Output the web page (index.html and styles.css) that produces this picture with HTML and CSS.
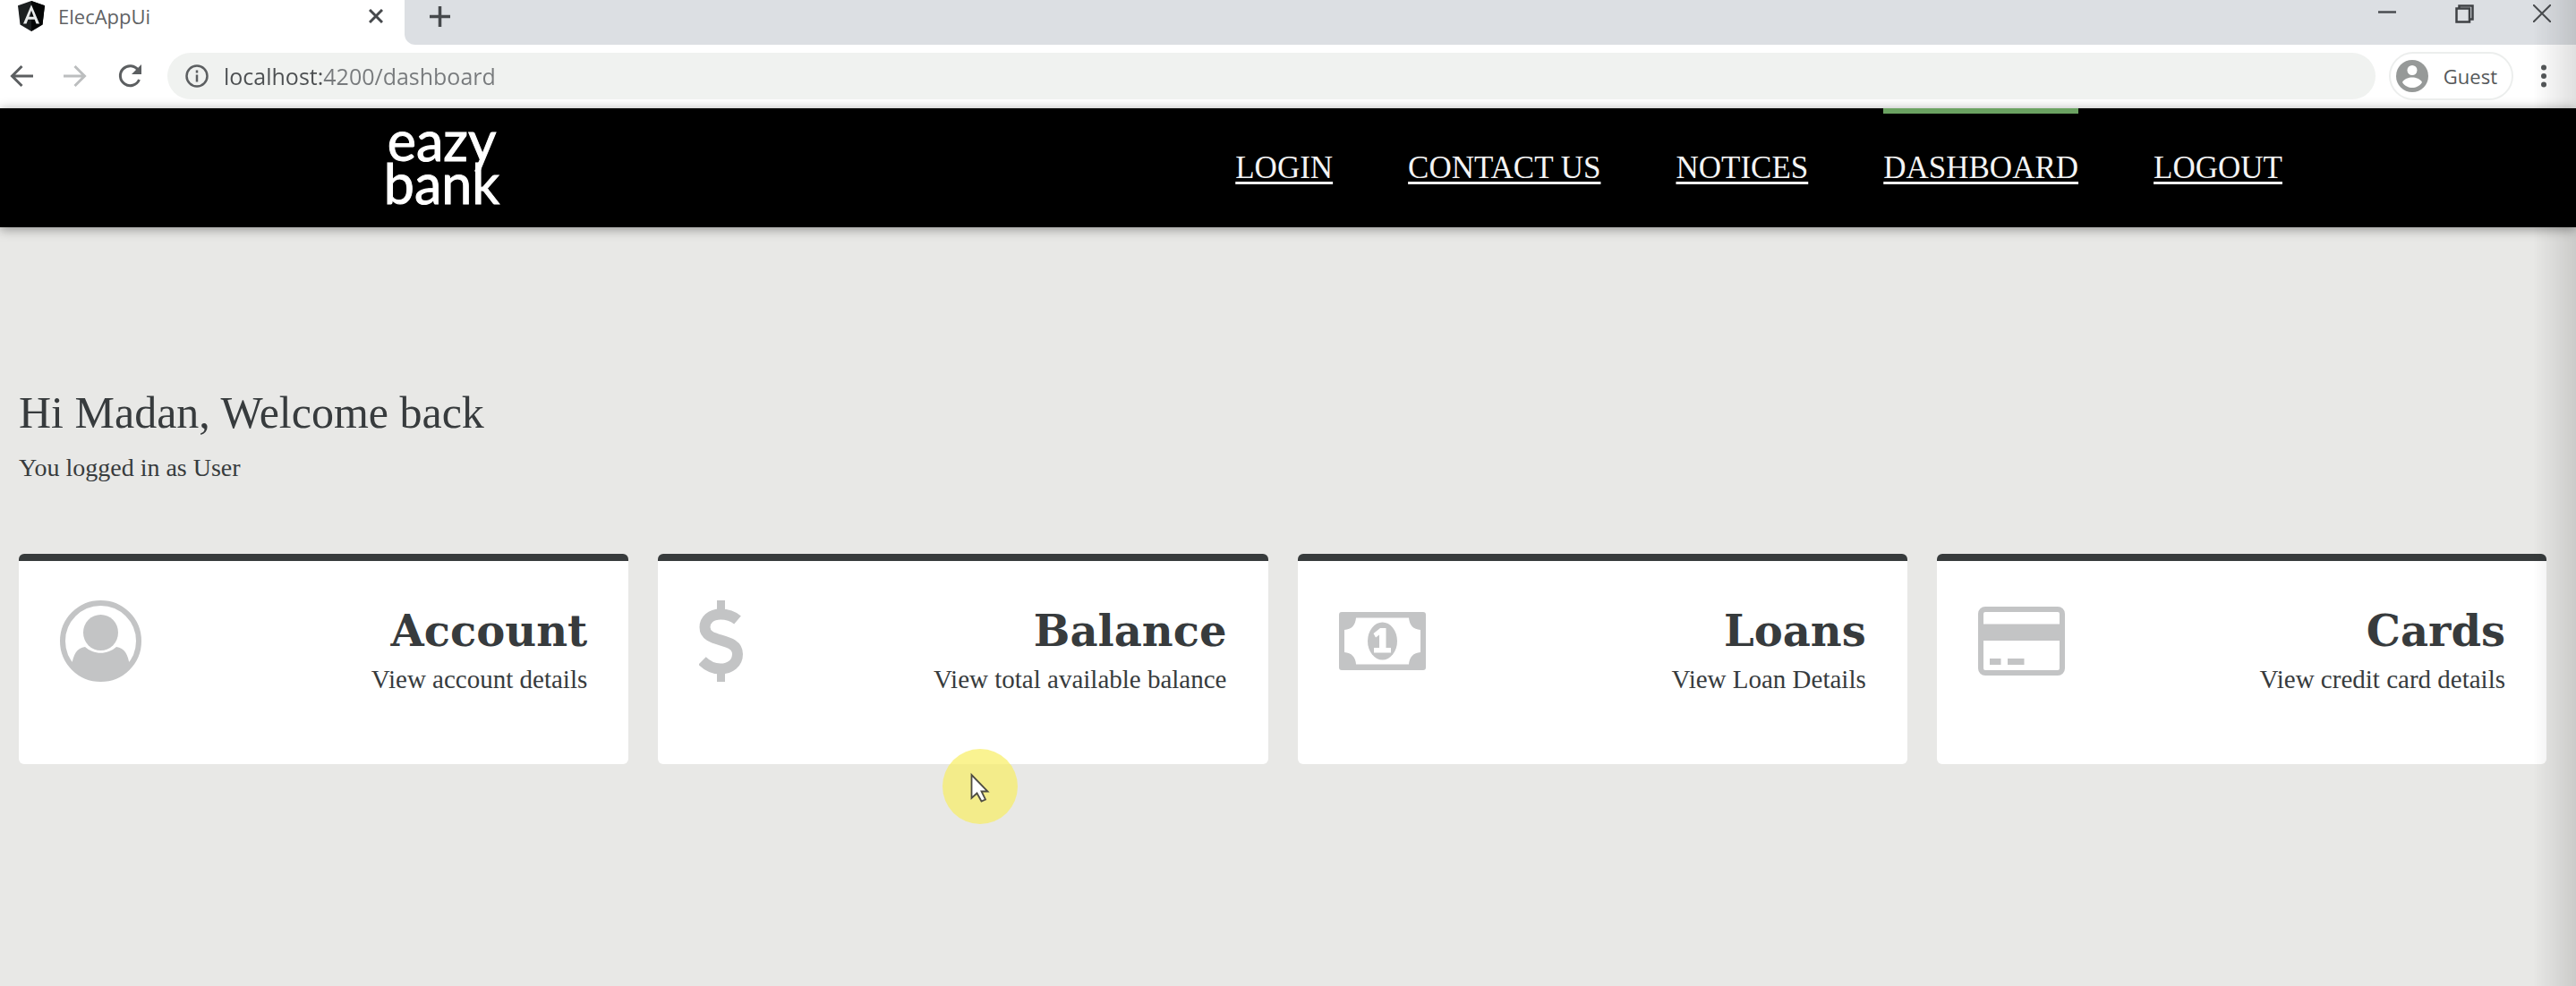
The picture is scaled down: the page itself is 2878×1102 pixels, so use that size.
FILE: index.html
```html
<!DOCTYPE html>
<html lang="en">
<head>
<meta charset="utf-8">
<meta name="viewport" content="width=device-width, initial-scale=1">
<title>ElecAppUi</title>
<link rel="stylesheet" href="styles.css">
</head>
<body>
<div class="tab-strip">
  <div class="tab">
    <svg class="tab-logo" width="30" height="34" viewBox="0 0 30 32" preserveAspectRatio="none" aria-hidden="true">
      <path d="M15 0 30 5 27.500 25 15 32 2.500 25 0 5Z" fill="#1c1f20"/>
      <path d="M15 0 30 5 27.500 25 15 32Z" fill="#050606"/>
      <path d="M15 4 6 24H9.500L11.300 19.500H18.700L20.500 24H24ZM15 10 17.600 16.600H12.400Z" fill="#e8eaea" fill-rule="evenodd"/>
    </svg>
    <span class="tab-title">ElecAppUi</span>
    <button class="icon-button" type="button" aria-label="Close tab">
      <svg width="16" height="16" viewBox="0 0 16 16"><path d="M1 1 15 15M15 1 1 15" stroke="#46494c" stroke-width="3"/></svg>
    </button>
  </div>
  <button class="icon-button new-tab" type="button" aria-label="New tab">
    <svg width="23" height="23" viewBox="0 0 23 23"><path d="M11.500 0V23M0 11.500H23" stroke="#46494c" stroke-width="3.500"/></svg>
  </button>
  <div class="window-controls">
    <button class="icon-button" type="button" aria-label="Minimize">
      <svg width="20" height="20" viewBox="0 0 20 20"><path d="M0 8.500H20" stroke="#4a4d50" stroke-width="2.500"/></svg>
    </button>
    <button class="icon-button" type="button" aria-label="Restore">
      <svg width="21" height="21" viewBox="0 0 21 21" fill="none" stroke="#3f4245" stroke-width="2.500"><path d="M1.500 4.500H16V19.500H1.500ZM4.500 4V1.500H19.500V16.500H16.500"/></svg>
    </button>
    <button class="icon-button" type="button" aria-label="Close window">
      <svg width="20" height="20" viewBox="0 0 20 20"><path d="M0 0 20 20M20 0 0 20" stroke="#4a4d50" stroke-width="2"/></svg>
    </button>
  </div>
</div>

<div class="toolbar">
  <div class="history">
    <button class="icon-button" type="button" aria-label="Back">
      <svg width="26" height="26" viewBox="0 0 26 26" fill="none" stroke="#5c5f61" stroke-width="3"><path d="M26 13H3M13.500 2 2.500 13 13.500 24"/></svg>
    </button>
    <button class="icon-button" type="button" aria-label="Forward">
      <svg width="26" height="26" viewBox="0 0 26 26" fill="none" stroke="#bcbebf" stroke-width="3"><path d="M0 13H23M12.500 2 23.500 13 12.500 24"/></svg>
    </button>
    <button class="icon-button" type="button" aria-label="Reload">
      <svg width="28" height="28" viewBox="0 0 28 28"><path d="M23.500 7.500A11 11 0 1 0 24.500 18" fill="none" stroke="#5c5f61" stroke-width="3"/><path d="M27 1V12H16Z" fill="#5c5f61"/></svg>
    </button>
  </div>
  <div class="address">
    <svg width="26" height="26" viewBox="0 0 26 26" aria-hidden="true"><circle cx="13" cy="13" r="11.500" fill="none" stroke="#5c5f61" stroke-width="2.500"/><path d="M13 11.500V19.500M13 6.500V9.500" stroke="#5c5f61" stroke-width="2.500"/></svg>
    <input class="url-field" type="text" aria-label="Address" value="localhost:4200/dashboard">
  </div>
  <button class="profile" type="button">
    <svg width="36" height="36" viewBox="0 0 36 36" aria-hidden="true"><circle cx="18" cy="18" r="18" fill="#969998"/><circle cx="18" cy="11.500" r="5.500" fill="#fff"/><path d="M7 25C9 21 14 19.500 18 19.500S27 21 29 25C26.500 29 22 31 18 31S9.500 29 7 25Z" fill="#fff"/></svg>
    <span>Guest</span>
  </button>
  <button class="icon-button menu-button" type="button" aria-label="Browser menu">
    <svg width="6" height="26" viewBox="0 0 6 26" fill="#55585a"><circle cx="3" cy="3.500" r="3"/><circle cx="3" cy="13" r="3"/><circle cx="3" cy="22.500" r="3"/></svg>
  </button>
</div>

<header class="site-header">
  <a class="brand" href="#">eazy<br>bank</a>
  <nav class="site-nav" aria-label="Main">
    <a href="#">LOGIN</a>
    <a href="#">CONTACT US</a>
    <a href="#">NOTICES</a>
    <a class="active" href="#">DASHBOARD</a>
    <a href="#">LOGOUT</a>
  </nav>
</header>

<main class="dashboard">
  <h1 class="greeting">Hi Madan, Welcome back</h1>
  <p class="role">You logged in as User</p>
  <div class="cards">
    <article class="card">
      <svg class="card-icon" width="91" height="91" viewBox="0 0 91 91" aria-hidden="true">
        <circle cx="45.500" cy="45.500" r="42.500" fill="none" stroke="#c3c4c5" stroke-width="6"/>
        <ellipse cx="45.500" cy="36" rx="19.500" ry="20" fill="#c3c4c5"/>
        <path d="M13 73C15 60 19 53 28 52C38 61 53 61 63 52C72 53 76 60 78 73C70 84 58 90 45.500 90S21 84 13 73Z" fill="#c3c4c5"/>
      </svg>
      <div class="card-text"><h2>Account</h2><p>View account details</p></div>
    </article>
    <article class="card">
      <svg class="card-icon" width="49" height="91" viewBox="0 0 49 91" fill="none" stroke="#c3c4c5" aria-hidden="true">
        <path d="M24.500 0V16M24.500 76V91" stroke-width="9"/>
        <path d="M43 22C37 17 31 15.500 24 15.500C13 15.500 6.500 22 6.500 30C6.500 49 43 40 43 60C43 70 35 76.500 24 76.500C16 76.500 9 73 3.500 67.500" stroke-width="12"/>
      </svg>
      <div class="card-text"><h2>Balance</h2><p>View total available balance</p></div>
    </article>
    <article class="card">
      <svg class="card-icon" width="97" height="91" viewBox="0 0 97 91" aria-hidden="true">
        <path d="M3 13H94Q97 13 97 16V75Q97 78 94 78H3Q0 78 0 75V16Q0 13 3 13ZM19 19.500Q18 32 6 33V58Q18 59 19 71.500H78Q79 59 91 58V33Q79 32 78 19.500Z" fill="#c3c4c5" fill-rule="evenodd"/>
        <ellipse cx="48.500" cy="45.500" rx="16.500" ry="21" fill="#c3c4c5"/>
        <path d="M46 31H52.500V53H58V58.500H39V53H45V38.500L41 41.500 38.500 37Z" fill="#fff"/>
      </svg>
      <div class="card-text"><h2>Loans</h2><p>View Loan Details</p></div>
    </article>
    <article class="card">
      <svg class="card-icon" width="97" height="91" viewBox="0 0 97 91" aria-hidden="true">
        <rect x="3" y="10" width="91" height="71" rx="5" fill="none" stroke="#c3c4c5" stroke-width="6"/>
        <path d="M3 26.500H94V45H3ZM13 65H25.500V72H13ZM33 65H51.500V72H33Z" fill="#c3c4c5"/>
      </svg>
      <div class="card-text"><h2>Cards</h2><p>View credit card details</p></div>
    </article>
  </div>
</main>

<svg class="pointer" width="84" height="84" viewBox="0 0 84 84" aria-hidden="true">
  <circle cx="42" cy="42" r="42" fill="#f8ee62" fill-opacity=".7"/>
  <path d="M32.500 29V55L38.500 49.500 43.500 58.500 48 56.500 43.500 47.500H50.500Z" fill="#fff" stroke="#4e4c42" stroke-width="1.800"/>
</svg>
</body>
</html>
```
FILE: styles.css
```css
* {
  box-sizing: border-box;
}

body {
  margin: 0;
  min-height: 100vh;
  background: #e8e8e6;
  color: #373b3d;
  font-family: "Liberation Serif", Georgia, serif;
}

/* soft shade along the right edge of the window */
body::after {
  content: "";
  position: fixed;
  inset: 0 0 0 auto;
  width: 48px;
  background: linear-gradient(to right, rgba(0, 0, 0, 0), rgba(0, 0, 0, .12));
  pointer-events: none;
}

h1, h2, p {
  margin: 0;
}

button {
  font: inherit;
  color: inherit;
}

svg {
  display: block;
  flex: none;
}

.icon-button {
  display: flex;
  padding: 0;
  border: 0;
  background: none;
}

/* browser tabs */
.tab-strip {
  display: flex;
  align-items: flex-start;
  height: 50px;
  background: #dcdfe3;
  font-family: "Open Sans", "Noto Sans", sans-serif;
}

.tab {
  display: flex;
  align-items: center;
  gap: 15px;
  width: 452px;
  height: 50px;
  padding: 0 24px 14px 20px;
  background: #fff;
  box-shadow: 12px 12px 0 #fff;
  clip-path: inset(0 -12px 0 0);
}

.tab-title {
  flex: 1;
  font-size: 22px;
  line-height: 30px;
  color: #5f6264;
}

.new-tab {
  z-index: 1;
  flex: 1;
  height: 50px;
  padding: 7px 0 0 28px;
  border-bottom-left-radius: 12px;
  background: #dcdfe3;
}

.window-controls {
  display: flex;
  gap: 66px;
  padding: 5px 28px 0 0;
}

/* browser toolbar */
.toolbar {
  display: flex;
  align-items: center;
  height: 71px;
  padding: 0 33px 2px 11px;
  background: #fff;
  font-family: "Open Sans", "Noto Sans", sans-serif;
}

.history {
  display: flex;
  align-items: center;
  gap: 34px;
  margin-right: 28px;
}

.address {
  display: flex;
  flex: 1;
  align-items: center;
  gap: 17px;
  height: 52px;
  padding: 0 20px;
  border-radius: 26px;
  background: #f0f2f0;
}

/* the host is darker than the rest of the address */
.url-field {
  flex: 1;
  min-width: 0;
  padding: 0;
  border: 0;
  background: linear-gradient(to right, #4c4f51 110px, #777a7c 110px);
  background-clip: text;
  color: transparent;
  font: 25px/34px "Open Sans", "Noto Sans", sans-serif;
}

.profile {
  display: flex;
  align-items: center;
  gap: 17px;
  height: 54px;
  margin: 0 31px 0 15px;
  padding: 0 16px 0 6px;
  border: 2px solid #eceeed;
  border-radius: 27px;
  background: #fff;
  font-size: 22px;
  line-height: 30px;
  color: #55585a;
}

/* site header */
.site-header {
  display: flex;
  justify-content: space-between;
  height: 133px;
  padding: 0 11.4% 0 14.9%;
  background: #000;
  box-shadow: 0 2px 12px rgba(0, 0, 0, .4);
}

.brand {
  padding-top: 12px;
  color: #fff;
  font-family: Lato, "Open Sans", sans-serif;
  font-size: 61px;
  line-height: 48px;
  text-align: center;
  text-decoration: none;
  -webkit-text-stroke: 1px #fff;
}

.site-nav {
  display: flex;
  gap: 84px;
}

.site-nav a {
  padding-top: 40px;
  border-top: 6px solid transparent;
  color: #f4f4f4;
  font-size: 35px;
  line-height: 42px;
  text-decoration-thickness: 3px;
  text-underline-offset: 4px;
}

.site-nav .active {
  border-top-color: #6ba262;
}

/* dashboard */
.dashboard {
  padding: 179px 33px 40px 21px;
}

.greeting {
  font-size: 50px;
  font-weight: 400;
  line-height: 56px;
}

.role {
  margin-top: 14px;
  font-size: 28px;
  line-height: 40px;
}

.cards {
  display: grid;
  grid-template-columns: repeat(4, 1fr);
  gap: 33px;
  margin-top: 76px;
}

.card {
  display: flex;
  justify-content: space-between;
  min-height: 235px;
  padding: 44px 46px;
  border-top: 8px solid #373b3c;
  border-radius: 6px;
  background: #fff;
}

.card-text {
  text-align: right;
}

.card-text h2 {
  font-family: "DejaVu Serif", Georgia, serif;
  font-size: 48px;
  line-height: 68px;
}

.card-text p {
  font-size: 29px;
  line-height: 40px;
}

/* mouse pointer with its highlight */
.pointer {
  position: absolute;
  top: 837px;
  left: 1053px;
}
```
